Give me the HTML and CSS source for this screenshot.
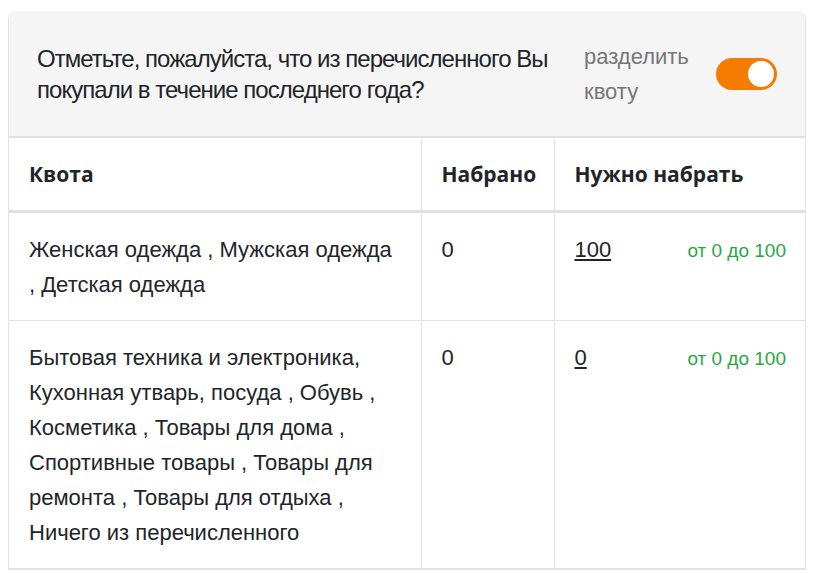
FILE: index.html
```html
<!DOCTYPE html>
<html lang="ru">
<head>
<meta charset="utf-8">
<link rel="stylesheet" href="styles.css">
</head>
<body>
<div class="card">
  <div class="card-header">
    <div class="question">Отметьте, пожалуйста, что из перечисленного Вы покупали в течение последнего года?</div>
    <div class="split">
      <span class="split-label">разделить квоту</span>
      <span class="toggle"><span class="knob"></span></span>
    </div>
  </div>
  <table class="quota">
    <thead>
      <tr>
        <th class="c1">Квота</th>
        <th class="c2">Набрано</th>
        <th class="c3">Нужно набрать</th>
      </tr>
    </thead>
    <tbody>
      <tr>
        <td>Женская одежда , Мужская одежда , Детская одежда</td>
        <td>0</td>
        <td><div class="need"><span class="val">100</span><span class="range">от 0 до 100</span></div></td>
      </tr>
      <tr>
        <td>Бытовая техника и электроника, Кухонная утварь, посуда , Обувь , Косметика , Товары для дома , Спортивные товары , Товары для ремонта , Товары для отдыха , Ничего из перечисленного</td>
        <td>0</td>
        <td><div class="need"><span class="val">0</span><span class="range">от 0 до 100</span></div></td>
      </tr>
    </tbody>
  </table>
</div>
</body>
</html>
```

FILE: styles.css
```css
* { box-sizing: border-box; }
body {
  margin: 0;
  padding: 11px 8px 0 8px;
  background: #fff;
  font-family: "Liberation Sans", Arial, sans-serif;
  color: #212529;
}
.card {
  width: 798px;
  border: 1px solid #e3e3e3;
  border-top: none;
  border-radius: 8px 8px 0 0;
  overflow: hidden;
}
.card-header {
  background: #f5f5f5;
  display: flex;
  align-items: center;
  padding: 0 28px 0 28px;
  height: 127px;
  border-bottom: 2px solid #dee2e6;
}
.question {
  font-size: 24px;
  line-height: 31px;
  letter-spacing: -0.97px;
  width: 530px;
  color: #212529;
}
.split {
  margin-left: auto;
  display: flex;
  align-items: center;
  gap: 27px;
}
.split-label {
  width: 105px;
  font-size: 22px;
  line-height: 35px;
  color: #777;
}
.toggle {
  width: 61px;
  height: 32px;
  border-radius: 16px;
  background: #f57c00;
  position: relative;
  display: inline-block;
}
.knob {
  position: absolute;
  right: 3px;
  top: 3px;
  width: 26px;
  height: 26px;
  border-radius: 50%;
  background: #fff;
}
.quota {
  width: 797px;
  border-collapse: collapse;
  table-layout: fixed;
}
.c1 { width: 412px; }
.c2 { width: 133px; }
.c3 { width: 252px; }
th {
  text-align: left;
  font-family: "Open Sans", "Liberation Sans", sans-serif;
  font-weight: 700;
  font-size: 21px;
  line-height: 33px;
  padding: 20px 20px 19px 20px;
  border-right: 1px solid #e3e3e3;
  border-bottom: 3px solid #dee2e6;
  color: #212529;
}
th:last-child, td:last-child { border-right: none; }
td {
  vertical-align: top;
  font-size: 22px;
  line-height: 35px;
  padding: 19px 20px 18px 20px;
  border-right: 1px solid #e3e3e3;
  border-bottom: 1px solid #e3e3e3;
  color: #212529;
}
.need {
  display: flex;
  justify-content: space-between;
  align-items: baseline;
}
.val { text-decoration: underline; }
.range {
  color: #28a745;
  font-size: 19px;
}
```
